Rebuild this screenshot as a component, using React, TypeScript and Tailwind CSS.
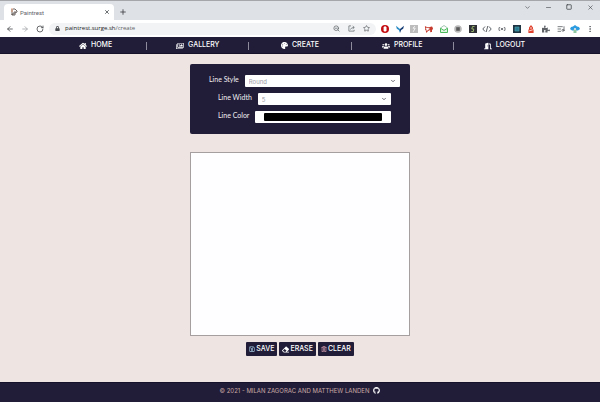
import type { ReactNode } from "react";
import {
  FaHome, FaRegImages, FaPalette, FaUsers, FaDoorOpen, FaGithub, FaRegSave, FaEraser,
  FaRegTrashAlt, FaLock, FaPuzzlePiece, FaBullhorn,
} from "react-icons/fa";
import {
  ArrowLeft, ArrowRight, RotateCw, X, Plus, ChevronDown, Minus, Square, ZoomOut,
  Star, Code, ListMusic, EllipsisVertical,
} from "lucide-react";

const navItems = [
  { label: "HOME", icon: <FaHome size={8} /> },
  { label: "GALLERY", icon: <FaRegImages size={8} /> },
  { label: "CREATE", icon: <FaPalette size={7} /> },
  { label: "PROFILE", icon: <FaUsers size={8} /> },
  { label: "LOGOUT", icon: <FaDoorOpen size={8} /> },
];

function IconButton({ label, children }: { label: string; children: ReactNode }) {
  return (
    <button aria-label={label} className="flex h-3 w-2.5 shrink-0 items-center justify-center">
      {children}
    </button>
  );
}

function TabStrip() {
  return (
    <div className="flex h-5 items-end border-t border-[#a5a6aa] bg-[#dee1e6] pl-1">
      <div className="flex h-4 w-[110px] items-center rounded-t bg-white pr-0.5 pl-1.5">
        <svg viewBox="0 0 8 8" className="size-2">
          <path d="M1 1h2v6H1z" fill="#b9b2ad" />
          <path d="M3 1h2l2 2v1L5 5v2H2V6h2V4h2" fill="none" stroke="#5b5350" strokeWidth=".9" />
          <path d="M2 0v4" stroke="#d98b62" strokeWidth=".8" />
        </svg>
        <span className="ml-0.5 grow text-[6px] text-[#5f6368]">Paintrest</span>
        <IconButton label="Close tab"><X size={6} strokeWidth={3} color="#3c4043" /></IconButton>
      </div>
      <div className="flex h-4 items-center pl-1">
        <IconButton label="New tab"><Plus size={8} strokeWidth={2.5} color="#3c4043" /></IconButton>
      </div>
      <div className="ml-auto flex h-full items-start gap-[11px] pr-[5px] text-[#3c4043]">
        <IconButton label="Search tabs"><ChevronDown size={7} /></IconButton>
        <IconButton label="Minimize"><Minus size={7} /></IconButton>
        <IconButton label="Maximize"><Square size={6} strokeWidth={3} /></IconButton>
        <IconButton label="Close window"><X size={7} /></IconButton>
      </div>
    </div>
  );
}

function Extensions() {
  return (
    <div className="flex w-[215px] shrink-0 items-center justify-between text-[#5f6368]">
      <IconButton label="Blocker">
        <svg viewBox="0 0 8 8" className="size-2">
          <circle cx="4" cy="4" r="4" fill="#c40d12" />
          <path d="M2.6 2.6 3.6 1.2h.9l1 1.2v3L4.6 6.6H3.4L2.6 5.4z" fill="#fff" />
        </svg>
      </IconButton>
      <IconButton label="Bird">
        <svg viewBox="0 0 8 8" className="size-2">
          <path d="M0 .8 4 4v4L2.8 5 .8 3.8z" fill="#2b8bc4" />
          <path d="M8 .8 4 4v4l1.2-3 2-1.2z" fill="#173f75" />
        </svg>
      </IconButton>
      <IconButton label="Reader">
        <svg viewBox="0 0 8 8" className="size-2">
          <path d="M0 0h8v8H0z" fill="#bdbdbd" />
          <path d="M4.8 1.2 3 3.2h2.2L3.2 6.8" fill="none" stroke="#f2f2f2" strokeWidth="1" />
        </svg>
      </IconButton>
      <IconButton label="Announcements">
        <span className="flex -scale-x-100 -rotate-12"><FaBullhorn size={8} color="#c53a2d" /></span>
      </IconButton>
      <IconButton label="Mail">
        <svg viewBox="0 0 8 8" className="size-2">
          <path d="M.5 3 4 .5 7.5 3" fill="none" stroke="#8ab79a" strokeWidth=".8" />
          <path d="M.5 3.2 4 5.4l3.5-2.2v4.3h-7z" fill="#dff5df" stroke="#4cba5c" strokeWidth="1" />
        </svg>
      </IconButton>
      <IconButton label="Recorder">
        <svg viewBox="0 0 8 8" className="size-2">
          <circle cx="4" cy="4" r="3.8" fill="#b9b9b9" />
          <path d="M2.2 2.2h3.6v3.6H2.2z" fill="#5a5a5a" />
        </svg>
      </IconButton>
      <IconButton label="Stylus">
        <svg viewBox="0 0 8 8" className="size-2">
          <path d="M0 0h8v8H0z" fill="#303237" />
          <path d="M5.5 1.5h-2L2.8 4h2L4.3 6.5h-2" fill="none" stroke="#9bb46c" strokeWidth="1" />
        </svg>
      </IconButton>
      <IconButton label="Code">
        <svg viewBox="0 0 10 8" className="h-2 w-2.5" fill="none" stroke="currentColor" strokeWidth="1">
          <path d="M3 1.5.8 4 3 6.5M7 1.5 9.2 4 7 6.5M5.8 1 4.2 7" />
        </svg>
      </IconButton>
      <IconButton label="Signal">
        <svg viewBox="0 0 8 8" className="size-2" fill="none" stroke="#5f6368" strokeWidth=".9">
          <path d="M1.5 2Q.2 4 1.5 6M6.5 2q1.3 2 0 4M2.8 3l2.4 2M5.2 3 2.8 5" />
        </svg>
      </IconButton>
      <IconButton label="Developer tools">
        <svg viewBox="0 0 8 8" className="size-2">
          <path d="M0 0h8v8H0z" fill="#203544" />
          <path d="M2 2h4v4H2z" fill="#2c7a91" stroke="#4aa6b3" strokeWidth=".6" />
        </svg>
      </IconButton>
      <IconButton label="Lighthouse">
        <svg viewBox="0 0 8 8" className="size-2">
          <path d="M2 2.4 4 0l2 2.4v2h.6V8H1.4V4.4H2z" fill="#e0412d" />
          <path d="M3 3h2M2.2 5.8 5.8 4.8" stroke="#fff" strokeWidth=".8" />
        </svg>
      </IconButton>
      <IconButton label="Extensions"><FaPuzzlePiece size={8} /></IconButton>
      <IconButton label="Media"><ListMusic size={8} strokeWidth={2.5} /></IconButton>
      <button aria-label="Account" className="flex w-2.5 justify-center">
        <svg viewBox="0 0 10 8" className="h-2 w-2.5">
          <path d="M0 4 1 2l2-.4L5 0l2 1.6L9 2l1 2-2 1.4H2z" fill="#2c9be0" />
          <path d="M3.5 4.5h3V8h-3z" fill="#8fc7a0" />
          <path d="M4 3.2h2v1.6H4z" fill="#f4e8e8" />
        </svg>
      </button>
      <IconButton label="Menu"><EllipsisVertical size={8} strokeWidth={2.5} /></IconButton>
    </div>
  );
}

function AddressBar() {
  return (
    <div className="flex h-[17px] items-center gap-1 bg-white px-[5px] text-[#4a4d51]">
      <IconButton label="Back"><ArrowLeft size={8} strokeWidth={2.5} /></IconButton>
      <span className="mx-px flex text-[#a3a6aa]">
        <IconButton label="Forward"><ArrowRight size={8} strokeWidth={2.5} /></IconButton>
      </span>
      <IconButton label="Reload"><RotateCw size={8} strokeWidth={2.5} /></IconButton>
      <div className="flex h-3 grow items-center rounded-full bg-[#f1f3f4] pr-[5px] pl-1.5">
        <FaLock size={5} />
        <a href="#url" className="ml-[5px] grow font-['Open_Sans',sans-serif] text-[6px] text-[#202124]">
          paintrest.surge.sh<span className="text-[#5f6368]">/create</span>
        </a>
        <div className="flex gap-[5px] text-[#5f6368]">
          <IconButton label="Zoom"><ZoomOut size={7} strokeWidth={2.5} /></IconButton>
          <IconButton label="Share">
            <svg viewBox="0 0 8 8" className="size-[7px]" fill="none" stroke="currentColor" strokeWidth=".8">
              <path d="M3.5 1H1v6h6V5.5M2.8 5.2Q3.2 3 6.8 2.8M5.4 1.2 7.2 2.8 5.4 4.4" />
            </svg>
          </IconButton>
          <IconButton label="Bookmark"><Star size={7} strokeWidth={2.5} /></IconButton>
        </div>
      </div>
      <Extensions />
    </div>
  );
}

function SelectRow({ id, label, value }: { id: string; label: string; value: string }) {
  return (
    <>
      <label htmlFor={id} className="font-[Lato,sans-serif] text-[7px] leading-2">{label}</label>
      <div className="relative flex grow">
        <select id={id} className="h-3 w-full appearance-none rounded-[1px] bg-white pl-1 text-[6px] text-[#9c9ca6]">
          <option>{value}</option>
        </select>
        <ChevronDown size={6} strokeWidth={3} color="#3d3d4c" className="pointer-events-none absolute top-[3px] right-1" />
      </div>
    </>
  );
}

function ToolButton({ icon, children }: { icon: ReactNode; children: ReactNode }) {
  return (
    <button className="flex h-3.5 items-center gap-px rounded-[1px] bg-[#211d38] px-[3px] text-[7px] font-medium text-white">
      {icon}
      {children}
    </button>
  );
}

export default function App() {
  return (
    <div className="flex min-h-screen flex-col bg-[#eee5e2] font-[Inter,sans-serif]">
      <header className="font-[Roboto,sans-serif]">
        <TabStrip />
        <AddressBar />
      </header>
      <nav className="flex h-[17px] justify-center border-b border-[#15112a] bg-[#211d38] pt-px">
        <ul className="flex w-[85%] items-center divide-x divide-[#8e8c9c]">
          {navItems.map((item) => (
            <li key={item.label} className="flex h-2 flex-1 items-center justify-center">
              <a href="#nav" className="flex items-center gap-1 text-[7px] font-medium text-white">
                {item.icon}
                {item.label}
              </a>
            </li>
          ))}
        </ul>
      </nav>

      <main className="flex grow flex-col items-center pt-2.5">
        <form className="flex w-[220px] flex-col gap-1.5 rounded-[2px] bg-[#211d38] py-[11px] text-[#f1eef2]">
          <div className="flex gap-1.5 pr-2.5 pl-[19px]">
            <SelectRow id="line-style" label="Line Style" value="Round" />
          </div>
          <div className="flex gap-1.5 pr-[19px] pl-7">
            <SelectRow id="line-width" label="Line Width" value="5" />
          </div>
          <div className="flex gap-1.5 pr-[19px] pl-7">
            <label htmlFor="line-color" className="font-[Lato,sans-serif] text-[7px] leading-2">Line Color</label>
            <input
              id="line-color"
              type="color"
              defaultValue="#000000"
              className="h-3 min-w-0 grow appearance-none rounded-[1px] bg-white px-[9px] py-0.5 [&::-webkit-color-swatch]:rounded-[1px] [&::-webkit-color-swatch]:border-0 [&::-webkit-color-swatch-wrapper]:p-0"
            />
          </div>
        </form>
        <canvas aria-label="Drawing area" className="mt-[18px] h-[184px] w-[220px] border border-[#a5a09f] bg-[#fefdff]" />
        <div className="mt-1.5 flex gap-0.5">
          <ToolButton icon={<FaRegSave size={6} color="#a9d0e8" />}>SAVE</ToolButton>
          <ToolButton icon={<FaEraser size={7} />}>ERASE</ToolButton>
          <ToolButton icon={<FaRegTrashAlt size={6} color="#eeb0c0" />}>CLEAR</ToolButton>
        </div>
      </main>

      <footer className="flex h-5 items-center justify-center gap-1 border-t border-[#15112a] bg-[#211d38] pb-1 text-[6px] text-[#c9a9a6]">
        <span>© 2021 - MILAN ZAGORAC AND MATTHEW LANDEN</span>
        <a href="#github" aria-label="GitHub" className="text-white"><FaGithub size={7} /></a>
      </footer>
    </div>
  );
}
